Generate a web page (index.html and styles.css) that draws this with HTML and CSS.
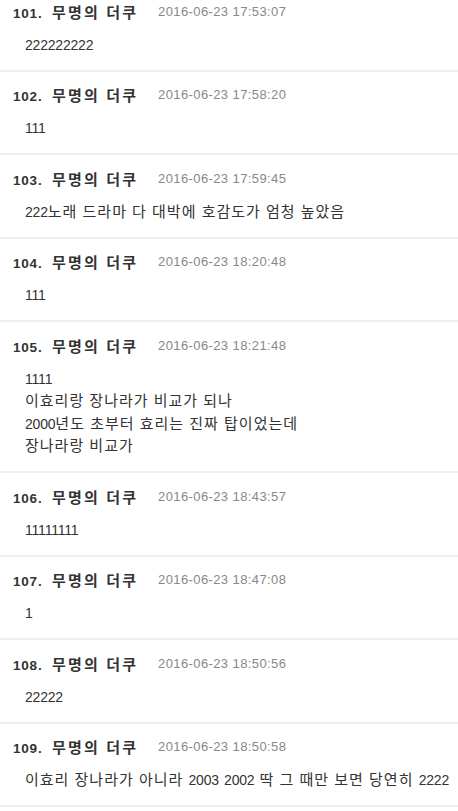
FILE: index.html
```html
<!DOCTYPE html>
<html lang="ko">
<head>
<meta charset="utf-8">
<title>댓글</title>
<link rel="stylesheet" href="styles.css">
</head>
<body>
<ul class="comments">
  <li class="comment">
    <div class="head"><span class="author"><span class="no">101.</span> <span class="nick">무명의 더쿠</span></span><span class="date">2016-06-23 17:53:07</span></div>
    <div class="body"><span class="num">222222222</span></div>
  </li>
  <li class="comment">
    <div class="head"><span class="author"><span class="no">102.</span> <span class="nick">무명의 더쿠</span></span><span class="date">2016-06-23 17:58:20</span></div>
    <div class="body"><span class="num">111</span></div>
  </li>
  <li class="comment">
    <div class="head"><span class="author"><span class="no">103.</span> <span class="nick">무명의 더쿠</span></span><span class="date">2016-06-23 17:59:45</span></div>
    <div class="body"><span class="num">222</span>노래 드라마 다 대박에 호감도가 엄청 높았음</div>
  </li>
  <li class="comment">
    <div class="head"><span class="author"><span class="no">104.</span> <span class="nick">무명의 더쿠</span></span><span class="date">2016-06-23 18:20:48</span></div>
    <div class="body"><span class="num">111</span></div>
  </li>
  <li class="comment">
    <div class="head"><span class="author"><span class="no">105.</span> <span class="nick">무명의 더쿠</span></span><span class="date">2016-06-23 18:21:48</span></div>
    <div class="body"><span class="num">1111</span><br>이효리랑 장나라가 비교가 되나<br><span class="num">2000</span>년도 초부터 효리는 진짜 탑이었는데<br>장나라랑 비교가</div>
  </li>
  <li class="comment">
    <div class="head"><span class="author"><span class="no">106.</span> <span class="nick">무명의 더쿠</span></span><span class="date">2016-06-23 18:43:57</span></div>
    <div class="body"><span class="num">11111111</span></div>
  </li>
  <li class="comment">
    <div class="head"><span class="author"><span class="no">107.</span> <span class="nick">무명의 더쿠</span></span><span class="date">2016-06-23 18:47:08</span></div>
    <div class="body"><span class="num">1</span></div>
  </li>
  <li class="comment">
    <div class="head"><span class="author"><span class="no">108.</span> <span class="nick">무명의 더쿠</span></span><span class="date">2016-06-23 18:50:56</span></div>
    <div class="body"><span class="num">22222</span></div>
  </li>
  <li class="comment">
    <div class="head"><span class="author"><span class="no">109.</span> <span class="nick">무명의 더쿠</span></span><span class="date">2016-06-23 18:50:58</span></div>
    <div class="body">이효리 장나라가 아니라 <span class="num">2003</span> <span class="num">2002</span> 딱 그 때만 보면 당연히 <span class="num">2222</span></div>
  </li>
</ul>
</body>
</html>
```
FILE: styles.css
```css
html, body {
  margin: 0;
  padding: 0;
  background: #fff;
}
body {
  font-family: "Liberation Sans", "Noto Sans CJK KR", sans-serif;
  color: #333;
  overflow: hidden;
}
.comments {
  list-style: none;
  margin: -12px 0 0 0;
  padding: 0;
}
.comment {
  border-bottom: 2px solid #efefef;
  padding: 13px 0 13.5px 13px;
}
.head {
  display: flex;
  align-items: center;
  height: 20px;
  white-space: nowrap;
}
.author {
  width: 145px;
  font-weight: bold;
  color: #333;
  word-spacing: 5px;
}
.no {
  font-size: 13.5px;
  letter-spacing: 0.8px;
}
.nick {
  font-size: 15px;
  letter-spacing: 2.2px;
  word-spacing: 0;
}
.date {
  font-size: 13px;
  letter-spacing: 0.4px;
  color: #888;
}
.body {
  margin-top: 12.5px;
  padding-left: 12px;
  font-size: 15px;
  line-height: 22.5px;
  letter-spacing: 1px;
  color: #333;
  white-space: nowrap;
}
.num {
  font-size: 14px;
  line-height: 1;
  letter-spacing: -0.2px;
}
```
